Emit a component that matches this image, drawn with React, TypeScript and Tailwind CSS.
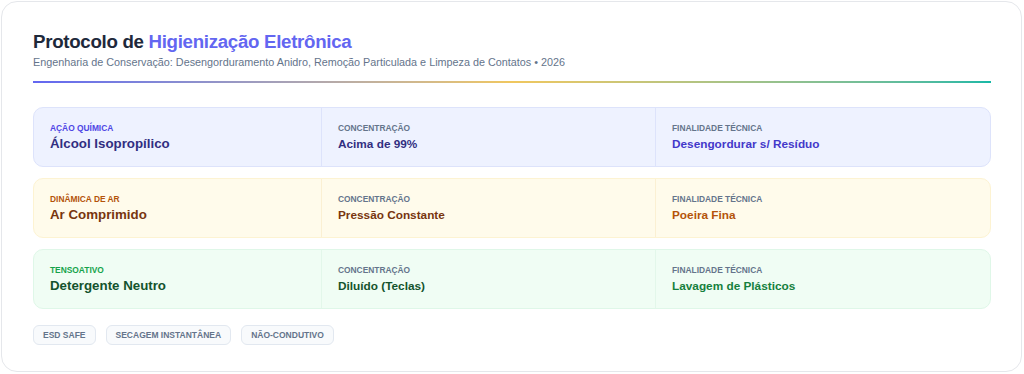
import React from "react";

type Cell = { label: string; value: string; labelClass: string; valueClass: string };

type Row = {
    rowClass: string;
    dividerClass: string;
    cells: Cell[];
};

const rows: Row[] = [
    {
        rowClass: "bg-[#eef2ff] border-[#dde3fb]",
        dividerClass: "border-[#dde3fb]",
        cells: [
            { label: "Ação Química", value: "Álcool Isopropílico", labelClass: "text-[#4f46e5]", valueClass: "text-[#312e81] text-[13.3px]" },
            { label: "Concentração", value: "Acima de 99%", labelClass: "text-[#64748b]", valueClass: "text-[#312e81] text-[11.8px]" },
            { label: "Finalidade Técnica", value: "Desengordurar s/ Resíduo", labelClass: "text-[#64748b]", valueClass: "text-[#4338ca] text-[11.8px]" },
        ],
    },
    {
        rowClass: "bg-[#fffbeb] border-[#fdf3d2]",
        dividerClass: "border-[#fbf0d3]",
        cells: [
            { label: "Dinâmica de Ar", value: "Ar Comprimido", labelClass: "text-[#b45309]", valueClass: "text-[#78350f] text-[13.3px]" },
            { label: "Concentração", value: "Pressão Constante", labelClass: "text-[#64748b]", valueClass: "text-[#78350f] text-[11.8px]" },
            { label: "Finalidade Técnica", value: "Poeira Fina", labelClass: "text-[#64748b]", valueClass: "text-[#b45309] text-[11.8px]" },
        ],
    },
    {
        rowClass: "bg-[#f0fdf4] border-[#dff7e8]",
        dividerClass: "border-[#e3f7ea]",
        cells: [
            { label: "Tensoativo", value: "Detergente Neutro", labelClass: "text-[#16a34a]", valueClass: "text-[#14532d] text-[13.3px]" },
            { label: "Concentração", value: "Diluído (Teclas)", labelClass: "text-[#64748b]", valueClass: "text-[#14532d] text-[11.8px]" },
            { label: "Finalidade Técnica", value: "Lavagem de Plásticos", labelClass: "text-[#64748b]", valueClass: "text-[#15803d] text-[11.8px]" },
        ],
    },
];

const tags = ["ESD Safe", "Secagem Instantânea", "Não-Condutivo"];

export default function App() {
    return (
        <div className="w-[1024px] h-[374px] bg-white p-px font-['Liberation_Sans',Arial,sans-serif]">
            <div className="h-[371px] w-[1021px] rounded-2xl border border-[#e5e7eb] bg-white px-[31px] pt-[27px]">
                <h1 className="text-[18.7px] leading-[26px] font-bold tracking-[-0.3px] text-[#1e293b]">
                    Protocolo de <span className="text-[#6366f1]">Higienização Eletrônica</span>
                </h1>
                <p className="mt-0 text-[10.8px] leading-[14px] text-[#64748b]">
                    Engenharia de Conservação: Desengorduramento Anidro, Remoção Particulada e Limpeza de Contatos • 2026
                </p>
                <div className="mt-[12px] h-[2px] w-[958px] bg-gradient-to-r from-[#6366f1] via-[#f0c75e] to-[#14b8a6]" />

                <div className="mt-[24px] flex w-[958px] flex-col gap-[11px]">
                    {rows.map((row, i) => (
                        <div
                            key={i}
                            className={`grid h-[60px] grid-cols-[287px_334px_1fr] rounded-[10px] border ${row.rowClass}`}
                        >
                            {row.cells.map((cell, j) => (
                                <div
                                    key={j}
                                    className={`flex flex-col justify-center px-4 ${j > 0 ? `border-l ${row.dividerClass}` : ""}`}
                                >
                                    <span className={`text-[8.4px] leading-[10px] font-bold uppercase ${cell.labelClass}`}>
                                        {cell.label}
                                    </span>
                                    <span className={`mt-[3px] leading-[16px] font-bold ${cell.valueClass}`}>
                                        {cell.value}
                                    </span>
                                </div>
                            ))}
                        </div>
                    ))}
                </div>

                <div className="mt-[16px] flex gap-[10px]">
                    {tags.map((tag) => (
                        <span
                            key={tag}
                            className="flex h-[20px] items-center rounded-md border border-[#e2e8f0] bg-[#f8fafc] px-[9px] text-[8.5px] font-bold uppercase text-[#64748b]"
                        >
                            {tag}
                        </span>
                    ))}
                </div>
            </div>
        </div>
    );
}
